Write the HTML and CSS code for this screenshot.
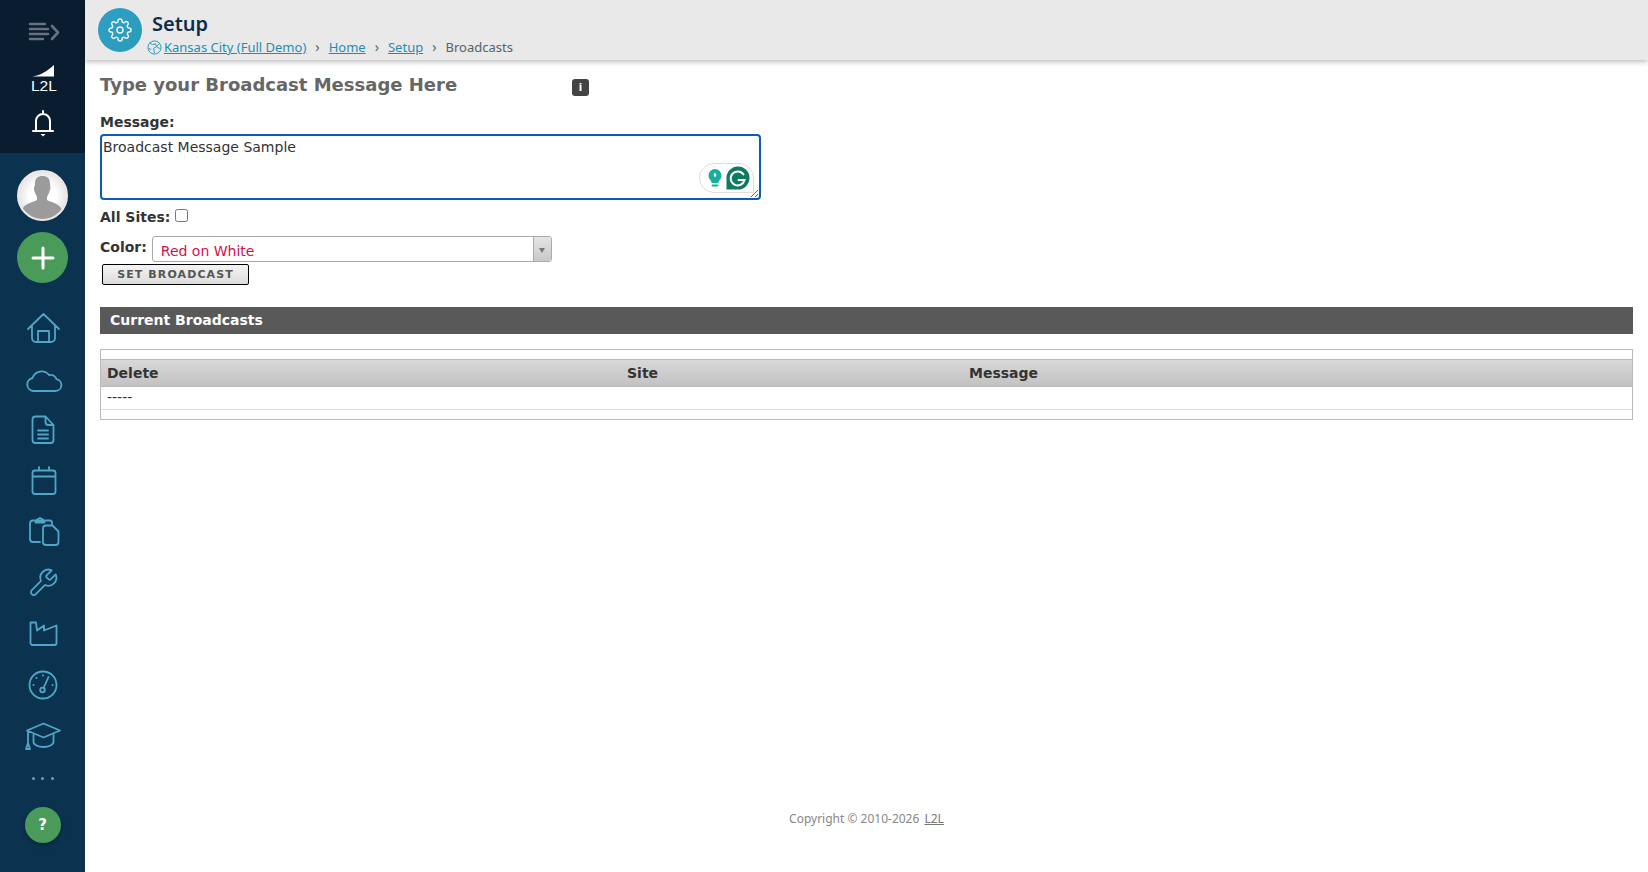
FILE: index.html
```html
<!DOCTYPE html>
<html lang="en">
<head>
<meta charset="utf-8">
<title>Setup - Broadcasts</title>
<link rel="stylesheet" href="styles.css">
</head>
<body>
<div class="app">
  <aside class="sidebar">
    <div class="side-top">
      <svg class="ic-menu" width="40" height="24" viewBox="0 0 40 24"><g fill="none" stroke="#66727d" stroke-width="2.6" stroke-linecap="round" stroke-linejoin="round"><path d="M7 4h15M7 9h18M7 14h18M7 19h13M29 6l6 6.5-6 6.5"/></g></svg>
      <svg class="ic-logo" width="40" height="28" viewBox="0 0 40 28"><path d="M9 11.5C17 11 24 6 31 0v11.5z" fill="#fff"/><text x="8" y="26" class="logo-text">L2L</text></svg>
      <svg class="ic-bell" width="30" height="30" viewBox="0 0 30 30"><g fill="none" stroke="#fff" stroke-width="2" stroke-linecap="round" stroke-linejoin="round"><path d="M15 3v2M8 22V13a7 7 0 0 1 14 0v9M5 23h20"/></g><path d="M12.5 26h5l-2.5 2.5z" fill="#fff"/></svg>
    </div>
    <div class="side-main">
      <div class="avatar"><svg width="47" height="47" viewBox="0 0 47 47"><path d="M16 12c0-6 3-8 7.500-8s7.500 2 7.500 8c0 2 1 3 0 6-1 3-2 5-3 7v3c3 2 11 3 14 8 1 2 1 4 1 5a23 23 0 0 1-40 0c0-1 0-3 1-5 3-5 11-6 14-8v-3c-1-2-2-4-3-7-.5-3 1-4 1-6z" fill="#9b9b9b"/></svg></div>
      <div class="add"><svg width="24" height="24" viewBox="0 0 24 24"><path d="M12 2v20M2 12h20" stroke="#fff" stroke-width="3" stroke-linecap="round"/></svg></div>
      <nav class="nav">
        <svg class="nav-ic" viewBox="0 0 40 40"><path d="M5 21 20.500 6 36 21M9 18v12a4 4 0 0 0 4 4h15a4 4 0 0 0 4-4V18M15 34V23h11v11"/></svg>
        <svg class="nav-ic" viewBox="0 0 40 40"><path d="M10 32h22.500a6 6 0 0 0 1-11.900 6.500 6.500 0 0 0-7.500-4.100A9.500 9.500 0 0 0 9.500 19a6.600 6.600 0 0 0 .5 13z"/></svg>
        <svg class="nav-ic" viewBox="0 0 40 40"><path d="M12.500 6.500h10l8 8.500v15a3 3 0 0 1-3 3h-15a3 3 0 0 1-3-3V9.500a3 3 0 0 1 3-3zM22.500 6.500V12a3 3 0 0 0 3 3h5M15 20.500h10M15 24.500h10M15 28.500h10"/></svg>
        <svg class="nav-ic" viewBox="0 0 40 40"><path d="M12 9.500h18a2.500 2.500 0 0 1 2.500 2.500v18.500a2.500 2.500 0 0 1-2.500 2.500H12a2.500 2.500 0 0 1-2.500-2.500V12A2.500 2.500 0 0 1 12 9.500zM9.500 15.500h23M16 6v3.500M26 6v3.500"/></svg>
        <svg class="nav-ic" viewBox="0 0 40 40"><path d="M17 30h-7a3 3 0 0 1-3-3V11.500a3 3 0 0 1 3-3h17a3 3 0 0 1 2 1v3.500M12.500 10.500 14 7.500l3-1.500 3 1.500 1.500 3zM23 13.500h6.500l6 6V30a3 3 0 0 1-3 3H23a3 3 0 0 1-3-3V16.500a3 3 0 0 1 3-3z"/></svg>
        <svg class="nav-ic" viewBox="-3 -3 30 30"><path class="thin" d="M14.700 6.300a1 1 0 0 0 0 1.400l1.600 1.600a1 1 0 0 0 1.400 0l3.770-3.770a6 6 0 0 1-7.940 7.940l-6.910 6.910a2.120 2.120 0 0 1-3-3l6.910-6.910a6 6 0 0 1 7.940-7.940l-3.760 3.760z"/></svg>
        <svg class="nav-ic" viewBox="0 0 40 40"><path d="M7.500 8.500H13l1 8 7-5v5l12.500-5V29a2 2 0 0 1-2 2h-22a2 2 0 0 1-2-2z"/></svg>
        <svg class="nav-ic" viewBox="0 0 40 40"><circle cx="20" cy="20" r="13.500"/><circle cx="19.500" cy="25" r="2.300"/><path d="m20.500 23 5-11"/><path class="dots" d="M20 10.500v.1M13.500 13v.1M10.500 20v.1M29.500 20v.1"/></svg>
        <svg class="nav-ic" viewBox="0 0 40 40"><path d="M20.500 7.500 37 14.500 20.500 21.500 4 14.500zM10.500 19v7c0 2.500 4.500 5 10 5s10-2.500 10-5v-7M5 15.500V27M3 33l2-6 2 6z"/></svg>
      </nav>
      <div class="more"><span></span><span></span><span></span></div>
      <div class="help">?</div>
    </div>
  </aside>
  <div class="main">
    <header class="topbar">
      <div class="badge"><svg width="24" height="24" viewBox="0 0 24 24" fill="none" stroke="#e8f6fb" stroke-width="1.500" stroke-linejoin="round"><circle cx="12" cy="12" r="3"/><path d="M19.400 15a1.650 1.650 0 0 0 .33 1.820l.06.06a2 2 0 0 1 0 2.830 2 2 0 0 1-2.830 0l-.06-.06a1.650 1.650 0 0 0-1.820-.33 1.650 1.650 0 0 0-1 1.510V21a2 2 0 0 1-2 2 2 2 0 0 1-2-2v-.09A1.650 1.650 0 0 0 9 19.400a1.650 1.650 0 0 0-1.820.33l-.06.06a2 2 0 0 1-2.830 0 2 2 0 0 1 0-2.830l.06-.06a1.650 1.650 0 0 0 .33-1.820 1.650 1.650 0 0 0-1.510-1H3a2 2 0 0 1-2-2 2 2 0 0 1 2-2h.09A1.650 1.650 0 0 0 4.600 9a1.650 1.650 0 0 0-.33-1.820l-.06-.06a2 2 0 0 1 0-2.830 2 2 0 0 1 2.830 0l.06.06a1.650 1.650 0 0 0 1.820.33H9a1.650 1.650 0 0 0 1-1.510V3a2 2 0 0 1 2-2 2 2 0 0 1 2 2v.09a1.650 1.650 0 0 0 1 1.510 1.650 1.650 0 0 0 1.820-.33l.06-.06a2 2 0 0 1 2.830 0 2 2 0 0 1 0 2.830l-.06.06a1.650 1.650 0 0 0-.33 1.820V9a1.650 1.650 0 0 0 1.510 1H21a2 2 0 0 1 2 2 2 2 0 0 1-2 2h-.09a1.650 1.650 0 0 0-1.510 1z"/></svg></div>
      <div class="titles">
        <h1 class="page-title">Setup</h1>
        <div class="crumbs">
          <svg class="globe" width="15" height="15" viewBox="0 0 16 16" fill="none" stroke="#2a93b8" stroke-width="1"><circle cx="8" cy="8" r="7"/><path d="M3 3l3 2 3-1 1 3-3 2 1 5M13 4l-3 3 3 2 1.500-.5M1.500 9l3 1"/></svg>
          <a href="#">Kansas City (Full Demo)</a>
          <span class="sep">›</span>
          <a href="#">Home</a>
          <span class="sep">›</span>
          <a href="#">Setup</a>
          <span class="sep">›</span>
          <span class="here">Broadcasts</span>
        </div>
      </div>
    </header>
    <main class="content">
      <div class="heading-row">
        <h2 class="heading">Type your Broadcast Message Here</h2>
        <span class="info">i</span>
      </div>
      <label class="lbl msg-lbl" for="msg">Message:</label>
      <div class="ta-wrap">
        <textarea id="msg" class="ta">Broadcast Message Sample</textarea>
        <div class="gram">
          <svg width="16" height="20" viewBox="0 0 16 20"><path d="M8 1a6.500 6.500 0 0 0-6.500 6.500c0 2.500 1.500 4 2.500 5.500.5.800.6 1.500.6 2h6.800c0-.5.100-1.200.6-2 1-1.500 2.500-3 2.500-5.500A6.500 6.500 0 0 0 8 1z" fill="#15b09a"/><path d="M8 4.500 9.500 7 8 9.500 6.500 7z" fill="#fff"/><rect x="4.500" y="16.500" width="7" height="2" rx="1" fill="#15b09a"/></svg>
          <svg width="24" height="24" viewBox="0 0 24 24"><path d="M12 .5a11.500 11.500 0 0 1 0 23H.5V12A11.500 11.500 0 0 1 12 .5z" fill="#0e7a63"/><path d="M17.500 8.500a7 7 0 1 0 1 5.500h-6" fill="none" stroke="#fff" stroke-width="2" stroke-linecap="round"/></svg>
        </div>
      </div>
      <div class="row-sites"><label class="lbl" for="all">All Sites:</label><input id="all" class="chk" type="checkbox"></div>
      <div class="row-color">
        <span class="lbl">Color:</span>
        <div class="select"><span class="sel-val">Red on White</span><span class="sel-arrow"></span></div>
      </div>
      <button class="btn" type="button">SET BROADCAST</button>
      <div class="banner">Current Broadcasts</div>
      <div class="grid">
        <div class="grid-row grid-head"><span>Delete</span><span>Site</span><span>Message</span></div>
        <div class="grid-row grid-body"><span>-----</span></div>
      </div>
    </main>
    <footer class="foot">Copyright © 2010-2026 <a href="#">L2L</a></footer>
  </div>
</div>
</body>
</html>
```

FILE: styles.css
```css
* { box-sizing: border-box; }
html, body { margin: 0; height: 100%; }
body { font-family: "DejaVu Sans", sans-serif; background: #fff; color: #333; overflow: hidden; }
.app { display: flex; height: 872px; }

.sidebar { width: 85px; flex: none; display: flex; flex-direction: column; background: #0b3350; }
.side-top { height: 153px; background: #0a1c30; display: flex; flex-direction: column; align-items: center; padding-top: 20px; }
.ic-menu { display: block; }
.ic-logo { display: block; margin-top: 21px; }
.ic-bell { display: block; margin-top: 15px; }
.logo-text { font: 15.500px "Liberation Sans", sans-serif; fill: #fff; }
.side-main { flex: 1; display: flex; flex-direction: column; align-items: center; padding-top: 17px; }
.avatar { width: 51px; height: 51px; border-radius: 50%; background: radial-gradient(circle, #fff 40%, #cfcfcf 100%); border: 2px solid #ece8e8; overflow: hidden; }
.avatar svg { display: block; }
.add { width: 51px; height: 51px; margin-top: 11px; border-radius: 50%; background: #4a9b5a; display: flex; align-items: center; justify-content: center; }
.nav { display: flex; flex-direction: column; align-items: center; margin-top: 25px; gap: 11px; }
.nav-ic { width: 40px; height: 40px; display: block; fill: none; stroke: #4fa6c6; stroke-width: 1.800; stroke-linecap: round; stroke-linejoin: round; }
.nav-ic .thin { stroke-width: 1.350; }
.nav-ic .dots { stroke-width: 2; }
.more { display: flex; gap: 6.500px; margin-top: 21px; height: 3px; }
.more span { width: 3px; height: 3px; border-radius: 50%; background: #5fa9c8; }
.help { width: 36px; height: 36px; margin-top: 27px; border-radius: 50%; background: #4a9b5a; color: #fff; font: bold 15px/36px "DejaVu Sans", sans-serif; text-align: center; box-shadow: 0 2px 5px rgba(0,0,0,.3); }

.main { flex: 1; min-width: 0; display: flex; flex-direction: column; }
.topbar { height: 60px; flex: none; background: #e9e9e9; box-shadow: 0 2px 5px rgba(0,0,0,.25); display: flex; align-items: flex-start; padding: 8px 0 0 13px; position: relative; }
.badge { width: 44px; height: 44px; border-radius: 50%; background: linear-gradient(135deg, #2f9fc6, #2a9bb9); display: flex; align-items: center; justify-content: center; flex: none; }
.titles { margin-left: 5px; margin-top: 2px; }
.page-title { margin: 0 0 0 5px; font: 600 20px/28px "Noto Sans", sans-serif; color: #0c2e4c; }
.crumbs { display: flex; align-items: center; font: 13px/18px "Noto Sans", sans-serif; color: #5a6268; }
.crumbs a { color: #1f8db3; }
.globe { margin-right: 2px; }
.sep { margin: 0 9px; font-size: 14px; }

.content { flex: 1; padding: 0 15px; }
.heading-row { display: flex; align-items: center; height: 50px; padding-top: 0; }
.heading { margin: 0; width: 472px; font: bold 18px/22px "DejaVu Sans", sans-serif; color: #666; }
.info { width: 17px; height: 17px; border-radius: 3px; background: #444; color: #fff; font: bold 10px/17px "DejaVu Sans", sans-serif; text-align: center; margin-top: 5px; }
.lbl { font: bold 14px/18px "DejaVu Sans", sans-serif; color: #333; }
.msg-lbl { display: block; margin-top: 3px; }
.ta-wrap { position: relative; width: 661px; height: 66px; margin-top: 3px; }
.ta { display: block; width: 100%; height: 100%; padding: 2px 1px; border: 2px solid #0a5cb4; border-radius: 4px; font: 14px/18px "DejaVu Sans", sans-serif; color: #333; outline: none; }
.gram { position: absolute; right: 7px; top: 29px; width: 55px; height: 30px; border: 1px solid #ddd; border-radius: 15px 15px 0 15px; background: #fff; display: flex; align-items: center; justify-content: space-between; padding: 0 3px 0 7px; }
.row-sites { display: flex; align-items: flex-start; height: 23px; margin-top: 8px; }
.chk { width: 13px; height: 13px; margin: 1px 0 0 5px; }
.row-color { display: flex; align-items: center; height: 26px; margin-top: 5px; }
.row-color .lbl { margin-top: -4px; }
.select { width: 400px; height: 26px; margin-left: 5px; border: 1px solid #aaa; border-radius: 3px; display: flex; align-items: center; justify-content: space-between; overflow: hidden; }
.sel-val { padding-left: 8px; padding-top: 3px; font: 14px/18px "DejaVu Sans", sans-serif; color: #d0104f; }
.sel-arrow { width: 18px; height: 100%; background: linear-gradient(#e4e4e4, #c8c8c8); border-left: 1px solid #aaa; position: relative; }
.sel-arrow::after { content: ""; position: absolute; left: 5px; top: 11px; border: 3.500px solid transparent; border-top: 5px solid #777; }
.btn { display: block; width: 147px; height: 21px; margin: 2px 0 0 2px; padding: 0; border: 1px solid #000; border-radius: 2px; background: linear-gradient(#f4f4f4, #dcdcdc); color: #555; font: bold 11px/19px "DejaVu Sans", sans-serif; letter-spacing: 1.100px; }
.banner { height: 27px; margin-top: 22px; background: #595959; color: #fff; font: bold 14px/27px "DejaVu Sans", sans-serif; padding-left: 10px; }
.grid { height: 71px; margin-top: 15px; border: 1px solid #bbb; padding-top: 9px; }
.grid-row { display: grid; grid-template-columns: 520px 342px 1fr; padding-left: 6px; font-size: 14px; }
.grid-head { height: 28px; border-top: 1px solid #bbb; border-bottom: 1px solid #bbb; background: linear-gradient(#d8d8d8, #c2c2c2); font-weight: bold; line-height: 26px; color: #333; }
.grid-body { height: 23px; border-bottom: 1px solid #ddd; font-size: 14px; line-height: 20px; }

.foot { height: 86px; flex: none; text-align: center; font: 12px/16px "Noto Sans", sans-serif; color: #888; padding-top: 25px; }
.foot a { color: #777; margin-left: 2px; }
```
